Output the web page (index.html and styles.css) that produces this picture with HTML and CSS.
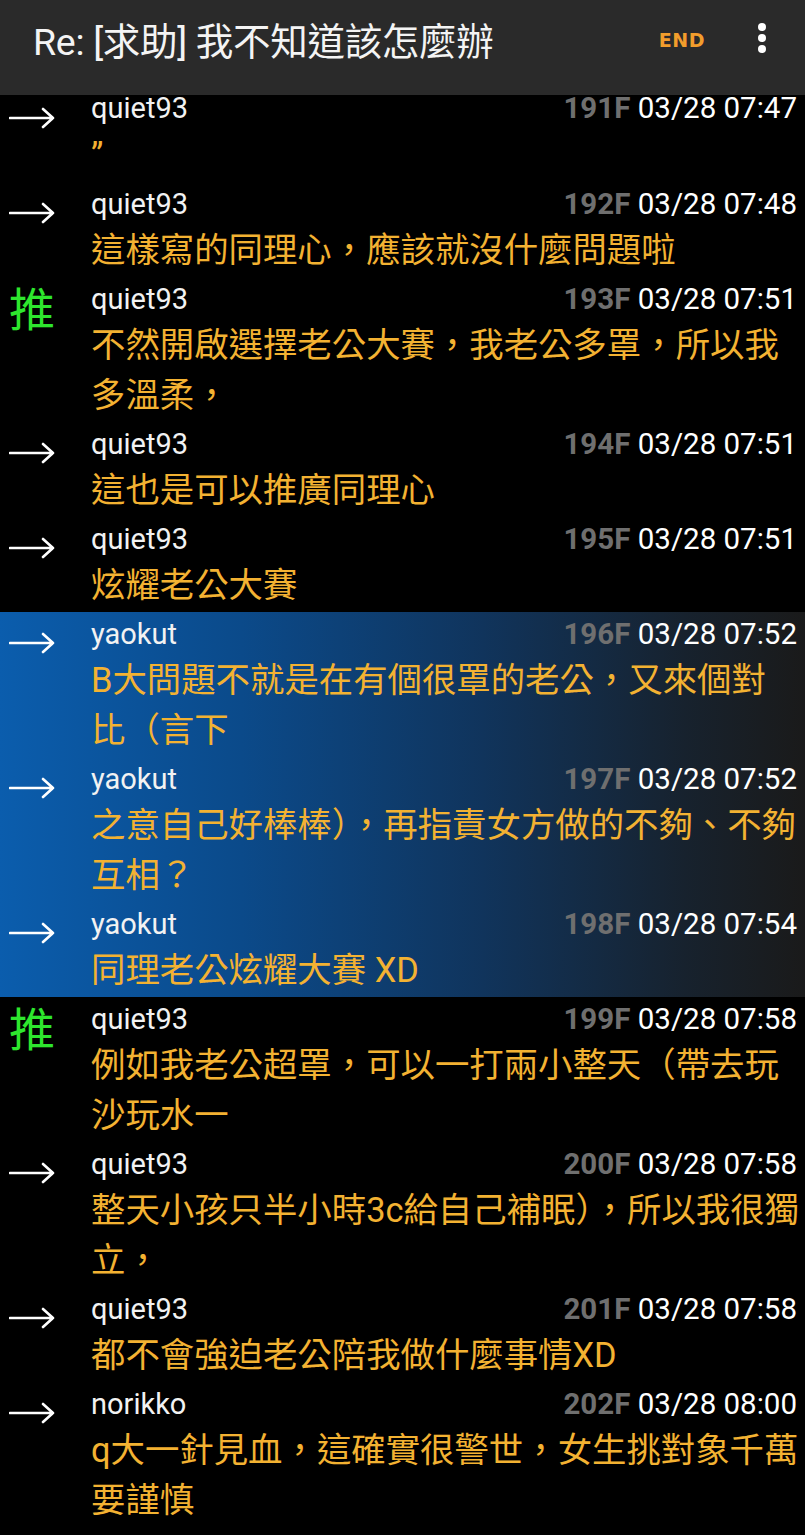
FILE: index.html
```html
<!DOCTYPE html>
<html lang="zh-Hant">
<head>
<meta charset="utf-8">
<title>Re: [求助] 我不知道該怎麼辦</title>
<link rel="stylesheet" href="styles.css">
</head>
<body>
<header class="topbar">
  <div class="bar">
    <div class="title">Re: [求助] 我不知道該怎麼辦</div>
    <div class="end">END</div>
    <svg class="more" width="14" height="36" viewBox="0 0 14 36"><circle cx="7" cy="7" r="4" fill="#fff"/><circle cx="7" cy="18" r="4" fill="#fff"/><circle cx="7" cy="29" r="4" fill="#fff"/></svg>
  </div>
</header>
<main class="list">
  <div class="row first">
    <div class="mark"><svg class="arrow" width="46" height="22" viewBox="0 0 46 22"><path d="M1 11H44M34 2L44 11L34 20" fill="none" stroke="#fff" stroke-width="2.6" stroke-linecap="round" stroke-linejoin="round"/></svg></div>
    <div class="body"><div class="meta"><span class="user">quiet93</span><span class="stamp"><b class="floor">191F</b> 03/28 07:47</span></div><div class="text">”</div></div>
  </div>
  <div class="row">
    <div class="mark"><svg class="arrow" width="46" height="22" viewBox="0 0 46 22"><path d="M1 11H44M34 2L44 11L34 20" fill="none" stroke="#fff" stroke-width="2.6" stroke-linecap="round" stroke-linejoin="round"/></svg></div>
    <div class="body"><div class="meta"><span class="user">quiet93</span><span class="stamp"><b class="floor">192F</b> 03/28 07:48</span></div><div class="text">這樣寫的同理心，應該就沒什麼問題啦</div></div>
  </div>
  <div class="row">
    <div class="mark"><span class="push">推</span></div>
    <div class="body"><div class="meta"><span class="user">quiet93</span><span class="stamp"><b class="floor">193F</b> 03/28 07:51</span></div><div class="text">不然開啟選擇老公大賽，我老公多罩，所以我<br>多溫柔，</div></div>
  </div>
  <div class="row">
    <div class="mark"><svg class="arrow" width="46" height="22" viewBox="0 0 46 22"><path d="M1 11H44M34 2L44 11L34 20" fill="none" stroke="#fff" stroke-width="2.6" stroke-linecap="round" stroke-linejoin="round"/></svg></div>
    <div class="body"><div class="meta"><span class="user">quiet93</span><span class="stamp"><b class="floor">194F</b> 03/28 07:51</span></div><div class="text">這也是可以推廣同理心</div></div>
  </div>
  <div class="row">
    <div class="mark"><svg class="arrow" width="46" height="22" viewBox="0 0 46 22"><path d="M1 11H44M34 2L44 11L34 20" fill="none" stroke="#fff" stroke-width="2.6" stroke-linecap="round" stroke-linejoin="round"/></svg></div>
    <div class="body"><div class="meta"><span class="user">quiet93</span><span class="stamp"><b class="floor">195F</b> 03/28 07:51</span></div><div class="text">炫耀老公大賽</div></div>
  </div>
  <div class="highlight">
    <div class="row">
      <div class="mark"><svg class="arrow" width="46" height="22" viewBox="0 0 46 22"><path d="M1 11H44M34 2L44 11L34 20" fill="none" stroke="#fff" stroke-width="2.6" stroke-linecap="round" stroke-linejoin="round"/></svg></div>
      <div class="body"><div class="meta"><span class="user">yaokut</span><span class="stamp"><b class="floor">196F</b> 03/28 07:52</span></div><div class="text">B大問題不就是在有個很罩的老公，又來個對<br>比（言下</div></div>
    </div>
    <div class="row">
      <div class="mark"><svg class="arrow" width="46" height="22" viewBox="0 0 46 22"><path d="M1 11H44M34 2L44 11L34 20" fill="none" stroke="#fff" stroke-width="2.6" stroke-linecap="round" stroke-linejoin="round"/></svg></div>
      <div class="body"><div class="meta"><span class="user">yaokut</span><span class="stamp"><b class="floor">197F</b> 03/28 07:52</span></div><div class="text">之意自己好棒棒），再指責女方做的不夠、不夠<br>互相？</div></div>
    </div>
    <div class="row">
      <div class="mark"><svg class="arrow" width="46" height="22" viewBox="0 0 46 22"><path d="M1 11H44M34 2L44 11L34 20" fill="none" stroke="#fff" stroke-width="2.6" stroke-linecap="round" stroke-linejoin="round"/></svg></div>
      <div class="body"><div class="meta"><span class="user">yaokut</span><span class="stamp"><b class="floor">198F</b> 03/28 07:54</span></div><div class="text">同理老公炫耀大賽 XD</div></div>
    </div>
  </div>
  <div class="row">
    <div class="mark"><span class="push">推</span></div>
    <div class="body"><div class="meta"><span class="user">quiet93</span><span class="stamp"><b class="floor">199F</b> 03/28 07:58</span></div><div class="text">例如我老公超罩，可以一打兩小整天（帶去玩<br>沙玩水一</div></div>
  </div>
  <div class="row">
    <div class="mark"><svg class="arrow" width="46" height="22" viewBox="0 0 46 22"><path d="M1 11H44M34 2L44 11L34 20" fill="none" stroke="#fff" stroke-width="2.6" stroke-linecap="round" stroke-linejoin="round"/></svg></div>
    <div class="body"><div class="meta"><span class="user">quiet93</span><span class="stamp"><b class="floor">200F</b> 03/28 07:58</span></div><div class="text">整天小孩只半小時3c給自己補眠），所以我很獨<br>立，</div></div>
  </div>
  <div class="row">
    <div class="mark"><svg class="arrow" width="46" height="22" viewBox="0 0 46 22"><path d="M1 11H44M34 2L44 11L34 20" fill="none" stroke="#fff" stroke-width="2.6" stroke-linecap="round" stroke-linejoin="round"/></svg></div>
    <div class="body"><div class="meta"><span class="user">quiet93</span><span class="stamp"><b class="floor">201F</b> 03/28 07:58</span></div><div class="text">都不會強迫老公陪我做什麼事情XD</div></div>
  </div>
  <div class="row">
    <div class="mark"><svg class="arrow" width="46" height="22" viewBox="0 0 46 22"><path d="M1 11H44M34 2L44 11L34 20" fill="none" stroke="#fff" stroke-width="2.6" stroke-linecap="round" stroke-linejoin="round"/></svg></div>
    <div class="body"><div class="meta"><span class="user">norikko</span><span class="stamp"><b class="floor">202F</b> 03/28 08:00</span></div><div class="text">q大一針見血，這確實很警世，女生挑對象千萬<br>要謹慎</div></div>
  </div>
</main>
</body>
</html>
```
FILE: styles.css
```css
html, body {
  margin: 0;
  padding: 0;
  background: #000;
}
body {
  width: 805px;
  height: 1535px;
  overflow: hidden;
  font-family: Roboto, "Noto Sans CJK TC", sans-serif;
  color: #fff;
}
.topbar {
  height: 95px;
  background: #2a2a2a;
}
.bar {
  height: 76px;
  display: flex;
  align-items: center;
  padding: 0 36px 0 33px;
}
.title {
  flex: 1;
  font-size: 37.5px;
  color: #f4f4f4;
  white-space: nowrap;
  letter-spacing: -0.3px;
}
.end {
  font-family: "DejaVu Sans", sans-serif;
  font-weight: bold;
  font-size: 19px;
  color: #f29d2c;
  letter-spacing: 0.5px;
  margin-right: 50px;
  margin-top: 4px;
}
.more {
  display: block;
}
.list {
  display: block;
}
.row {
  display: flex;
  padding-bottom: 2px;
}
.mark {
  width: 91px;
  flex: none;
}
.arrow {
  display: block;
  margin: 20px 0 0 9px;
}
.row.first .arrow {
  margin-top: 12px;
}
.push {
  display: block;
  font-family: "Noto Sans CJK TC", sans-serif;
  font-size: 46px;
  line-height: 46px;
  color: #2ee62e;
  margin: 6px 0 0 9px;
}
.body {
  flex: 1;
  min-width: 0;
  padding-right: 8px;
}
.meta {
  height: 43px;
  display: flex;
  justify-content: space-between;
  align-items: center;
  font-size: 29px;
  line-height: 34px;
  white-space: nowrap;
}
.row.first .meta {
  height: 35px;
  align-items: flex-start;
  line-height: 27px;
}
.user {
  color: #f2f2f2;
}
.stamp {
  color: #fff;
  font-size: 29.5px;
  letter-spacing: 0;
}
.floor {
  color: #6f6f6f;
  font-weight: bold;
}
.text {
  font-family: Roboto, "Noto Sans CJK TC", sans-serif;
  font-size: 34.4px;
  line-height: 50px;
  color: #f3b232;
  white-space: nowrap;
}
.highlight {
  background: linear-gradient(90deg, #0b5dad 0%, #0b4a8a 30%, #10345c 60%, #17222e 85%, #1a1a1a 100%);
}
```
